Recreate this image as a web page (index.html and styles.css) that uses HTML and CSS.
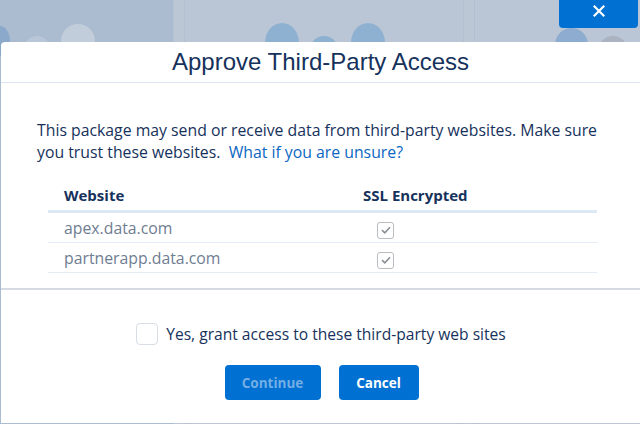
FILE: index.html
```html
<!DOCTYPE html>
<html>
<head>
<meta charset="utf-8">
<link rel="stylesheet" href="styles.css">
</head>
<body>
<div class="stage">
  <div class="bg">
    <div class="col col-a"></div>
    <div class="col col-gap"></div>
    <div class="col col-b"></div>
    <div class="col col-gap"></div>
    <div class="col col-c"></div>
  </div>
  <span class="dot d1"></span>
  <span class="dot d2"></span>
  <span class="dot d3"></span>
  <span class="dot d4"></span>
  <span class="dot d5"></span>
  <span class="dot d6"></span>
  <span class="dot d7"></span>
  <span class="dot d8"></span>
  <button class="close" aria-label="Close">
    <svg width="12" height="12" viewBox="0 0 12 12"><path d="M1.5 1.5 L10.5 10.5 M10.5 1.5 L1.5 10.5" stroke="#fff" stroke-width="2.2" stroke-linecap="square"/></svg>
  </button>

  <div class="modal">
    <header class="modal-header">
      <h2 class="title">Approve Third-Party Access</h2>
    </header>
    <section class="modal-body">
      <p class="intro">This package may send or receive data from third-party websites. Make sure you trust these websites.&nbsp; <a href="#" class="link">What if you are unsure?</a></p>
      <table class="sites">
        <thead>
          <tr><th class="c1">Website</th><th class="c2">SSL Encrypted</th></tr>
        </thead>
        <tbody>
          <tr><td class="c1">apex.data.com</td><td class="c2"><span class="ro-check"><svg width="10" height="8" viewBox="0 0 10 8"><path d="M1 4.2 L3.8 6.8 L9 1.2" fill="none" stroke="#8a8f96" stroke-width="1.6"/></svg></span></td></tr>
          <tr><td class="c1">partnerapp.data.com</td><td class="c2"><span class="ro-check"><svg width="10" height="8" viewBox="0 0 10 8"><path d="M1 4.2 L3.8 6.8 L9 1.2" fill="none" stroke="#8a8f96" stroke-width="1.6"/></svg></span></td></tr>
        </tbody>
      </table>
    </section>
    <footer class="modal-footer">
      <label class="grant"><span class="box"></span><span class="grant-text">Yes, grant access to these third-party web sites</span></label>
      <div class="actions">
        <button class="btn btn-disabled">Continue</button>
        <button class="btn btn-cancel">Cancel</button>
      </div>
    </footer>
  </div>
</div>
</body>
</html>
```
FILE: styles.css
```css
html, body {
  margin: 0;
  padding: 0;
}
body {
  width: 640px;
  height: 424px;
  overflow: hidden;
  background: #a3adba;
  font-family: "Open Sans", "Noto Sans", sans-serif;
}
.stage {
  position: relative;
  width: 640px;
  height: 424px;
  overflow: hidden;
}
.bg {
  position: absolute;
  inset: 0;
  display: flex;
}
.col {
  height: 100%;
}
.col-a {
  width: 173px;
  background: #abbcd1;
  border-right: 1px solid #b4c2d3;
}
.col-gap {
  width: 10px;
  background: #bcc7d5;
  border-right: 1px solid #b3bfcd;
}
.col-b {
  width: 278px;
  background: #bac6d5;
  border-right: 1px solid #b3bfcd;
}
.col-c {
  flex: 1;
  background: #bac6d5;
}
.dot {
  position: absolute;
  border-radius: 50%;
  background: #8fb0d1;
}
.d1 { left: -10px; top: 26px; width: 20px; height: 30px; background: #8ba9cb; }
.d2 { left: 24px; top: 36px; width: 26px; height: 26px; background: #b9c6d8; }
.d3 { left: 61px; top: 24px; width: 34px; height: 34px; background: #c2cddb; }
.d4 { left: 265px; top: 23px; width: 34px; height: 40px; background: #8eb1d2; }
.d5 { left: 310px; top: 36px; width: 28px; height: 28px; background: #8eb1d2; }
.d6 { left: 351px; top: 23px; width: 34px; height: 40px; background: #8eb1d2; }
.d7 { left: 555px; top: 28px; width: 33px; height: 34px; background: #8eaccf; }
.d8 { left: 598px; top: 36px; width: 30px; height: 30px; background: #aab3bf; }

.close {
  position: absolute;
  left: 559px;
  top: 0;
  width: 79px;
  height: 28px;
  border: 0;
  padding: 0;
  background: #0070d2;
  border-radius: 0 0 4px 4px;
  display: flex;
  align-items: center;
  justify-content: center;
  padding-bottom: 6px;
}

.modal {
  position: relative;
  margin: 42px 0 0 1px;
  width: 639px;
  height: 381px;
  background: #fff;
  border-radius: 4px 0 0 0;
  display: flex;
  flex-direction: column;
}
.modal-header {
  height: 40px;
  border-bottom: 1px solid #dbe6f2;
  display: flex;
  align-items: center;
  justify-content: center;
}
.title {
  margin: 0;
  font-family: "Liberation Sans", Arial, sans-serif;
  font-weight: 400;
  font-size: 24px;
  color: #16325c;
}
.modal-body {
  padding: 36px 36px 15px 36px;
  border-bottom: 2px solid #d6dbe3;
}
.intro {
  margin: 0 0 17px 0;
  font-size: 15.8px;
  line-height: 22px;
  color: #16325c;
}
.link {
  color: #0b67c2;
  text-decoration: none;
}
.sites {
  margin-left: 11px;
  width: 549px;
  border-collapse: collapse;
  font-size: 15.8px;
}
.sites th {
  text-align: left;
  font-weight: 700;
  font-size: 15px;
  color: #16325c;
  height: 30px;
  padding: 0 0 0 16px;
  border-bottom: 3px solid #dce8f4;
  vertical-align: middle;
  line-height: 18px;
}
.sites td {
  height: 29px;
  padding: 0 0 0 16px;
  color: #6f7d92;
  border-bottom: 1px solid #e3ecf6;
  vertical-align: middle;
  line-height: 20px;
}
.sites .c1 { width: 282px; }
.sites .c2 { padding-left: 17px; }
.sites td.c2 { padding-left: 31px; }
.ro-check {
  display: inline-flex;
  align-items: center;
  justify-content: center;
  width: 15px;
  height: 15px;
  border: 1px solid #b9bcc0;
  border-radius: 3px;
  vertical-align: middle;
  position: relative;
  top: 1px;
}

.modal-footer {
  flex: 1;
  display: flex;
  flex-direction: column;
  align-items: center;
  padding-top: 33px;
}
.grant {
  display: flex;
  align-items: center;
  gap: 8px;
  margin-left: 1px;
}
.box {
  width: 20px;
  height: 20px;
  border: 1px solid #d8dde6;
  border-radius: 4px;
  background: #fff;
}
.grant-text {
  font-size: 15.6px;
  color: #16325c;
  line-height: 22px;
}
.actions {
  display: flex;
  gap: 18px;
  margin-top: 20px;
  margin-left: 2px;
}
.btn {
  height: 35px;
  border: 0;
  border-radius: 4px;
  background: #0070d2;
  color: #fff;
  font-family: "Open Sans", "Noto Sans", sans-serif;
  font-weight: 700;
  font-size: 13.5px;
  padding: 0;
}
.btn-disabled {
  color: #74aee5;
  width: 96px;
}
.btn-cancel {
  width: 80px;
}
```
